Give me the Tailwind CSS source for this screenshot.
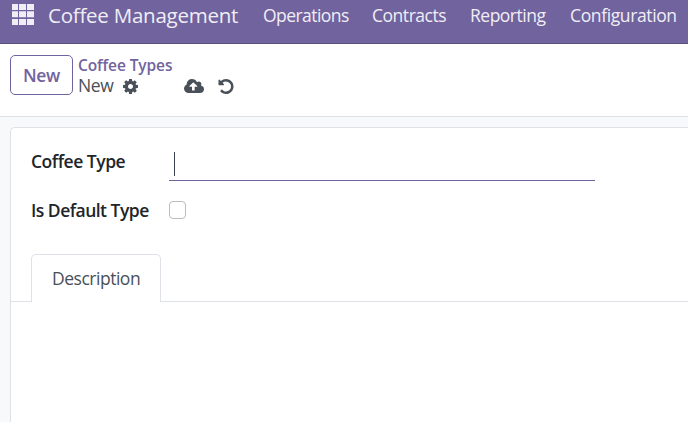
<!DOCTYPE html>
<html lang="en">
<head>
<meta charset="utf-8">
<title>Coffee Types</title>
<script src="https://cdn.jsdelivr.net/npm/@tailwindcss/browser@4"></script>
</head>
<body class="w-[688px] h-[422px] overflow-hidden bg-[#f8f9fb] font-['Segoe_UI','Open_Sans',sans-serif] text-[17.5px] text-[#212529] whitespace-nowrap flex flex-col">
<header class="h-11 shrink-0 bg-[#71639e] border-b border-[#5a4f7f] text-[#f0eef5] flex">
  <svg class="ml-3 mt-1 w-[22px] h-[21px] shrink-0" viewBox="0 0 22 21" fill="#f0eef5"><path d="M0 0h6v6H0zM7 0h7v6H7zM15 0h7v6h-7zM0 7.300h6v6H0zM7 7.300h7v6H7zM15 7.300h7v6h-7zM0 15h6v6H0zM7 15h7v6H7zM15 15h7v6h-7z"/></svg>
  <a class="ml-[14px] w-[215px] text-[20.5px] leading-[30px] tracking-[-0.24px]">Coffee Management</a>
  <nav class="flex leading-[30px] tracking-[-0.5px]">
    <a class="w-[109px] tracking-[-0.55px]">Operations</a><a class="w-[98px] tracking-[-0.47px]">Contracts</a><a class="w-[100px] tracking-[-0.5px]">Reporting</a><a class="tracking-[-0.38px]">Configuration</a>
  </nav>
</header>
<section class="h-[73px] shrink-0 bg-white border-b border-[#dee2e6] flex pl-[10px] pt-[11px]">
  <button class="w-[63px] h-10 border border-[#71639e] rounded-[5px] text-[#71639e] font-semibold tracking-[-0.4px] flex items-center justify-center">New</button>
  <div class="ml-[5px]">
    <a class="block h-5 leading-5 text-[15.500px] font-semibold tracking-[-0.1px] text-[#71639e]">Coffee Types</a>
    <div class="flex h-[22px] text-[#495057]">
      <span class="w-[45px] leading-5 tracking-[-0.4px]">New</span>
      <svg class="mt-1 w-[15px] h-[15px]" viewBox="0 -128 1536 1536" fill="#495057" fill-rule="evenodd"><path d="M1024 640q0 106-75 181t-181 75-181-75-75-181 75-181 181-75 181 75 75 181zm512-109v222q0 12-8 23t-20 13l-185 28q-19 54-39 91 35 50 107 138 10 12 10 25t-9 23q-27 37-99 108t-94 71q-12 0-26-9l-138-108q-44 23-91 38-16 136-29 186-7 28-36 28h-222q-14 0-24.500-8.500t-11.500-21.500l-28-184q-49-16-90-37l-141 107q-10 9-25 9-14 0-25-11-126-114-165-168-7-10-7-23 0-12 8-23 15-21 51-66.500t54-70.500q-27-50-41-99l-183-27q-13-2-21-12.500t-8-23.500v-222q0-12 8-23t19-13l186-28q14-46 39-92-40-57-107-138-10-12-10-24 0-10 9-23 26-36 98.500-107.500t94.500-71.500q13 0 26 10l138 107q44-23 91-38 16-136 29-186 7-28 36-28h222q14 0 24.500 8.500t11.500 21.500l28 184q49 16 90 37l142-107q9-9 24-9 13 0 25 10 129 119 165 170 7 8 7 22 0 12-8 23-15 21-51 66.500t-54 70.500q26 50 41 98l183 28q13 2 21 12.500t8 23.500z"/></svg>
      <svg class="ml-[46px] mt-1 w-[20px] h-[14px]" viewBox="0 0 1920 1408" preserveAspectRatio="none" fill="#495057" fill-rule="evenodd"><path d="M1280 736q0-14-9-23L919 361q-9-9-23-9t-23 9L522 712q-10 12-10 24 0 14 9 23t23 9h224v352q0 13 9.500 22.500t22.500 9.500h192q13 0 22.500-9.500t9.500-22.500V768h224q13 0 22.500-9.500t9.500-22.500zm640 288q0 159-112.500 271.500T1536 1408H448q-185 0-316.500-131.500T0 960q0-130 70-240t188-165q-2-30-2-43 0-212 150-362T768 0q156 0 285.500 87T1242 318q71-62 166-62 106 0 181 75t75 181q0 76-41 138 130 31 213.500 135.500T1920 1024z"/></svg>
      <svg class="ml-[14px] mt-1 w-[16px] h-[15px]" viewBox="0 -128 1536 1536" fill="#495057"><path d="M1536 640q0 156-61 298t-164 245-245 164-298 61q-172 0-327-72.500T177 1131q-7-10-6.500-22.500T179 1088l137-138q10-9 25-9 16 2 23 12 73 95 179 147t225 52q104 0 198.500-40.500T1130 1002t109.500-163.500T1280 640t-40.500-198.500T1130 278 966.500 168.500 768 128q-98 0-188 35.500T420 265l137 138q31 30 14 69-17 40-59 40H64q-26 0-45-19T0 448V0q0-42 40-59 39-17 69 14l130 129Q346-17 483.500-72.500T768-128q156 0 298 61t245 164 164 245 61 298z"/></svg>
    </div>
  </div>
</section>
<main class="mt-[10px] ml-[10px] flex-1 bg-white border-t border-l border-[#dee2e6] rounded-tl-[5px]">
  <div class="flex pl-5 pt-5">
    <label class="w-[138px] h-8 leading-[26px] font-semibold tracking-[-0.47px]">Coffee Type</label>
    <div class="w-[426px] h-[33px] border-b border-[#71639e] pl-[5px] pt-1"><div class="w-px h-6 bg-[#374151]"></div></div>
  </div>
  <div class="flex pl-5 mt-[15px]">
    <label class="w-[138px] h-8 leading-7 font-semibold tracking-[-0.52px]">Is Default Type</label>
    <span class="mt-[5px] w-[17px] h-[18px] border border-[#b9bcc0] rounded-[4px]"></span>
  </div>
  <div class="flex mt-[26px] h-12">
    <div class="w-5 border-b border-[#dee2e6]"></div>
    <div class="w-[130px] border border-b-0 border-[#dee2e6] rounded-t-[5px] text-[#495057] pl-5 leading-[46px] tracking-[-0.48px]">Description</div>
    <div class="flex-1 border-b border-[#dee2e6]"></div>
  </div>
</main>
</body>
</html>
